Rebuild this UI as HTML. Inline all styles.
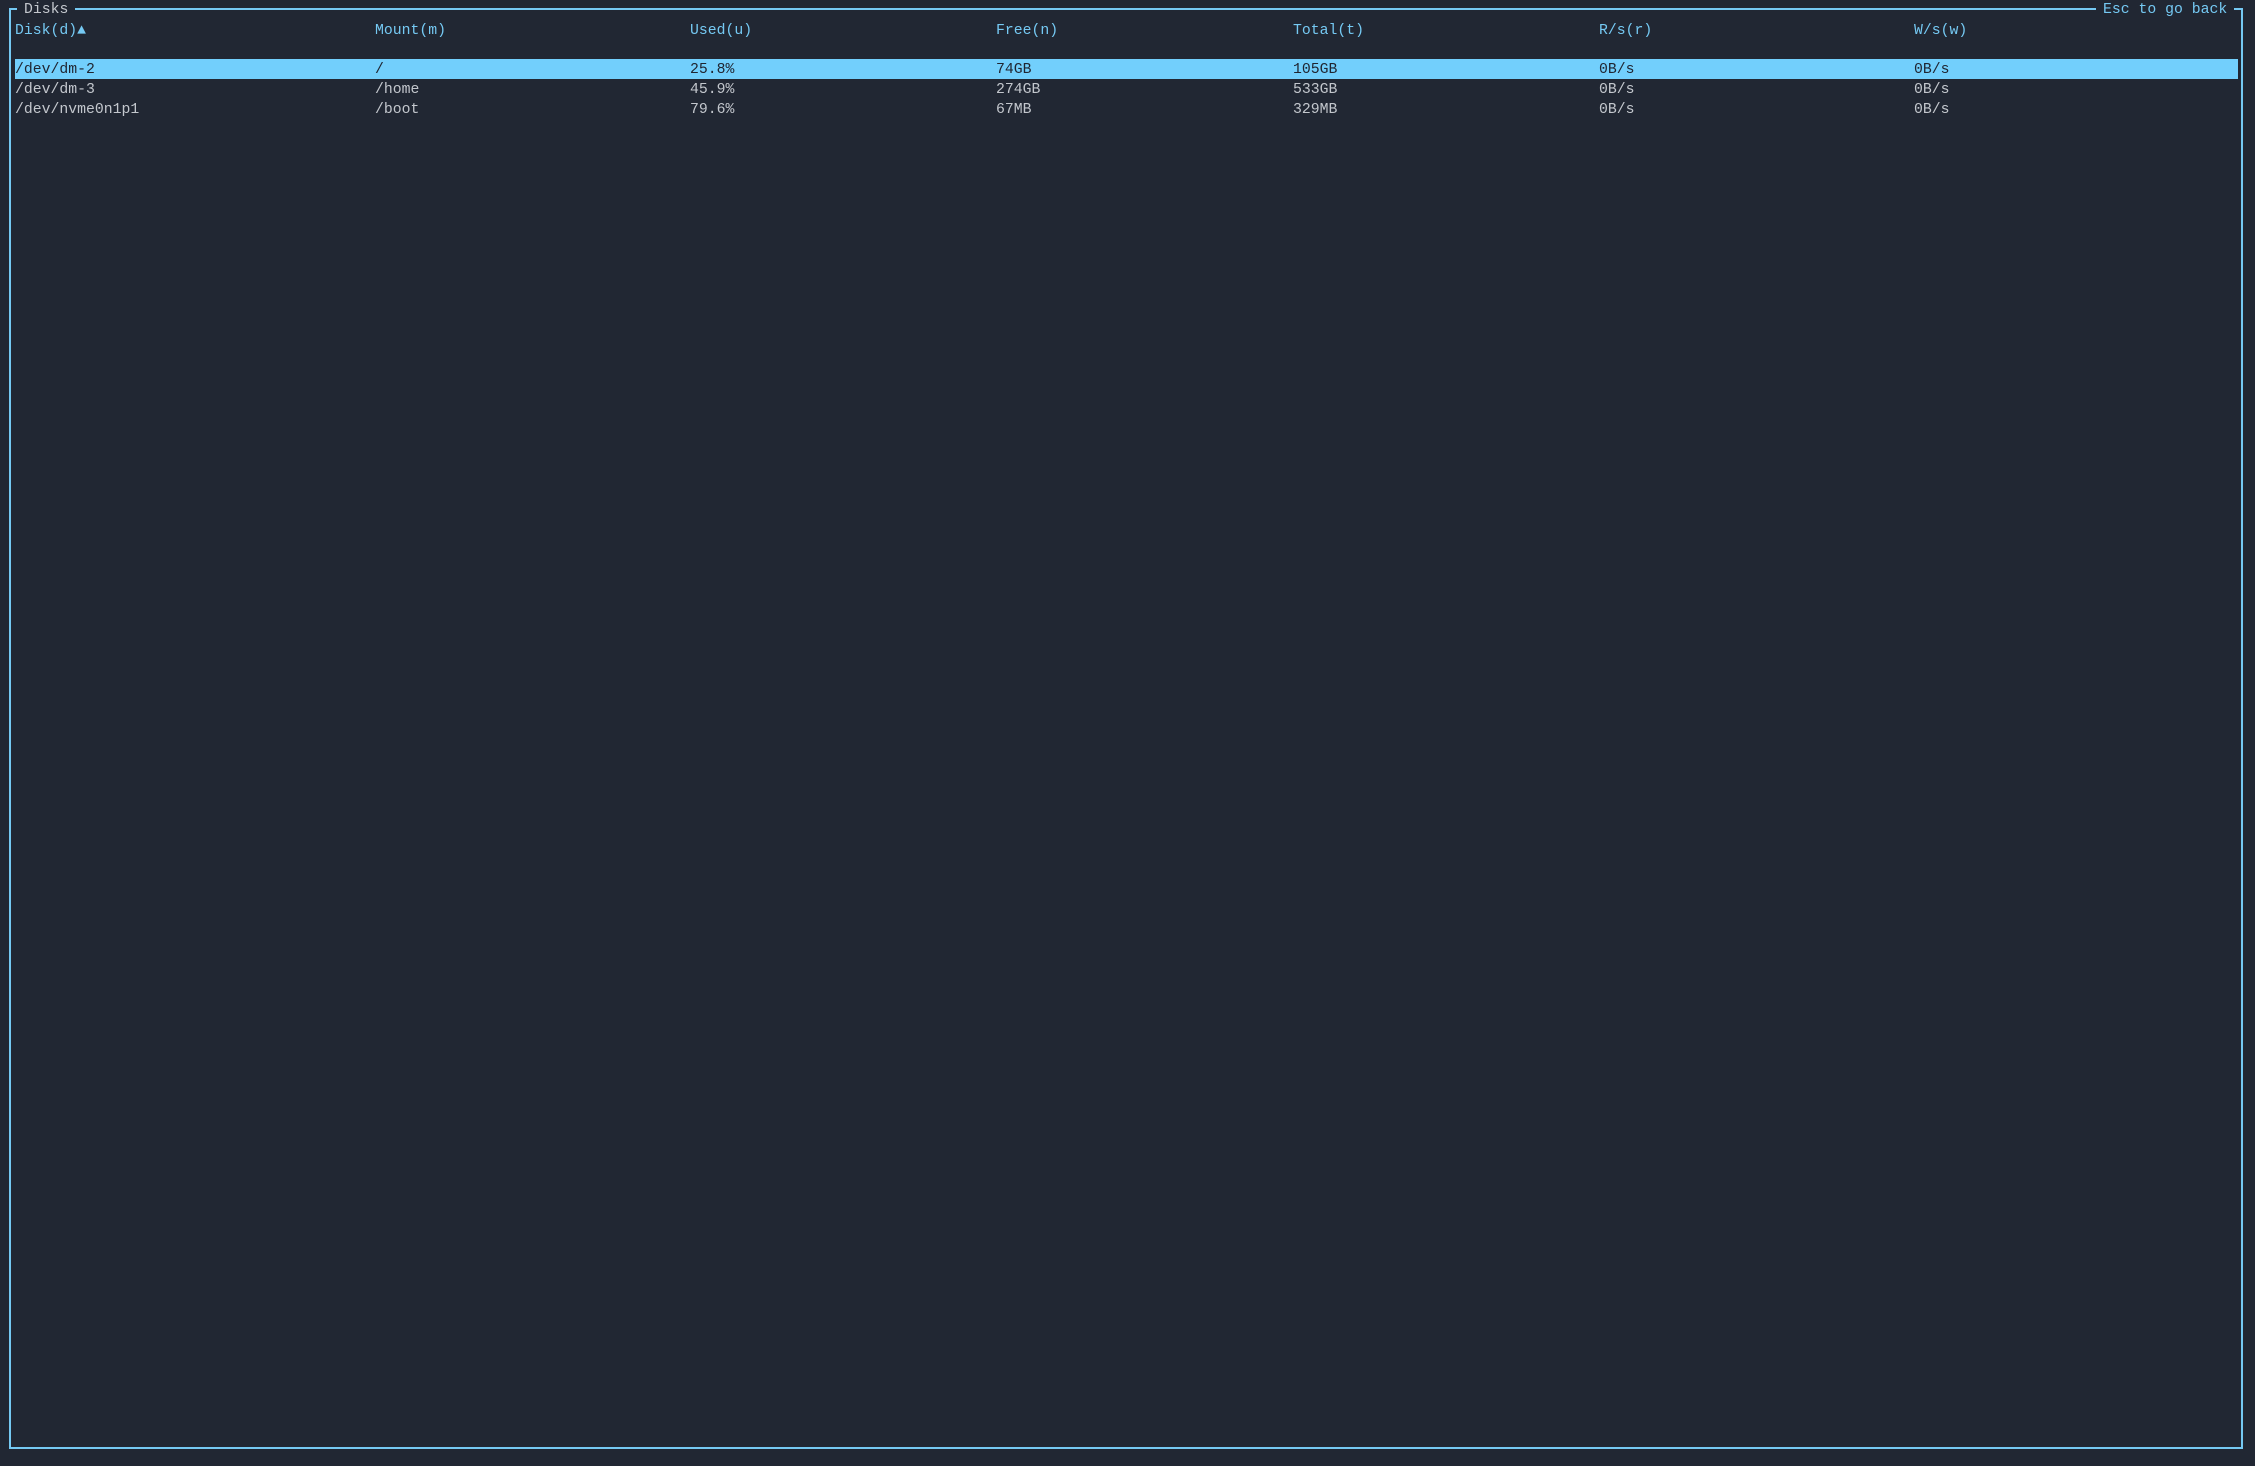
<!DOCTYPE html>
<html><head><meta charset="utf-8"><style>
html,body{margin:0;padding:0;background:#212733;width:2255px;height:1466px;overflow:hidden}
body{font-family:"Liberation Mono","DejaVu Sans Mono",monospace;font-size:14.8px;line-height:20px;color:#c3c7cd;position:relative}
.box{position:absolute;left:9px;top:8px;width:2230px;height:1439px;border:2px solid #75c9f3;border-top:none}
.top{position:absolute;left:9px;top:8px;height:2px;background:#75c9f3}
.t{position:absolute;background:#212733;padding:0 7px;top:1px;line-height:18px}
.r{position:absolute;left:15px;width:2223px;height:20px}
.c{position:absolute;top:2px;white-space:pre;line-height:18px}
.h{color:#75c9f3}
.sel{background:#72cffc;color:#1f2531}
</style></head><body>
<div class="box"></div>
<div class="top" style="width:2234px"></div>
<div class="t" style="left:17px;color:#c3c7cd">Disks</div>
<div class="t" style="left:2096px;color:#75c9f3">Esc to go back</div>
<div class="r h" style="top:20px">
<span class="c" style="left:0">Disk(d)▲</span><span class="c" style="left:360px">Mount(m)</span><span class="c" style="left:675px">Used(u)</span><span class="c" style="left:981px">Free(n)</span><span class="c" style="left:1278px">Total(t)</span><span class="c" style="left:1584px">R/s(r)</span><span class="c" style="left:1899px">W/s(w)</span></div>
<div class="r sel" style="top:59px">
<span class="c" style="left:0">/dev/dm-2</span><span class="c" style="left:360px">/</span><span class="c" style="left:675px">25.8%</span><span class="c" style="left:981px">74GB</span><span class="c" style="left:1278px">105GB</span><span class="c" style="left:1584px">0B/s</span><span class="c" style="left:1899px">0B/s</span></div>
<div class="r" style="top:79px">
<span class="c" style="left:0">/dev/dm-3</span><span class="c" style="left:360px">/home</span><span class="c" style="left:675px">45.9%</span><span class="c" style="left:981px">274GB</span><span class="c" style="left:1278px">533GB</span><span class="c" style="left:1584px">0B/s</span><span class="c" style="left:1899px">0B/s</span></div>
<div class="r" style="top:99px">
<span class="c" style="left:0">/dev/nvme0n1p1</span><span class="c" style="left:360px">/boot</span><span class="c" style="left:675px">79.6%</span><span class="c" style="left:981px">67MB</span><span class="c" style="left:1278px">329MB</span><span class="c" style="left:1584px">0B/s</span><span class="c" style="left:1899px">0B/s</span></div>
</body></html>
